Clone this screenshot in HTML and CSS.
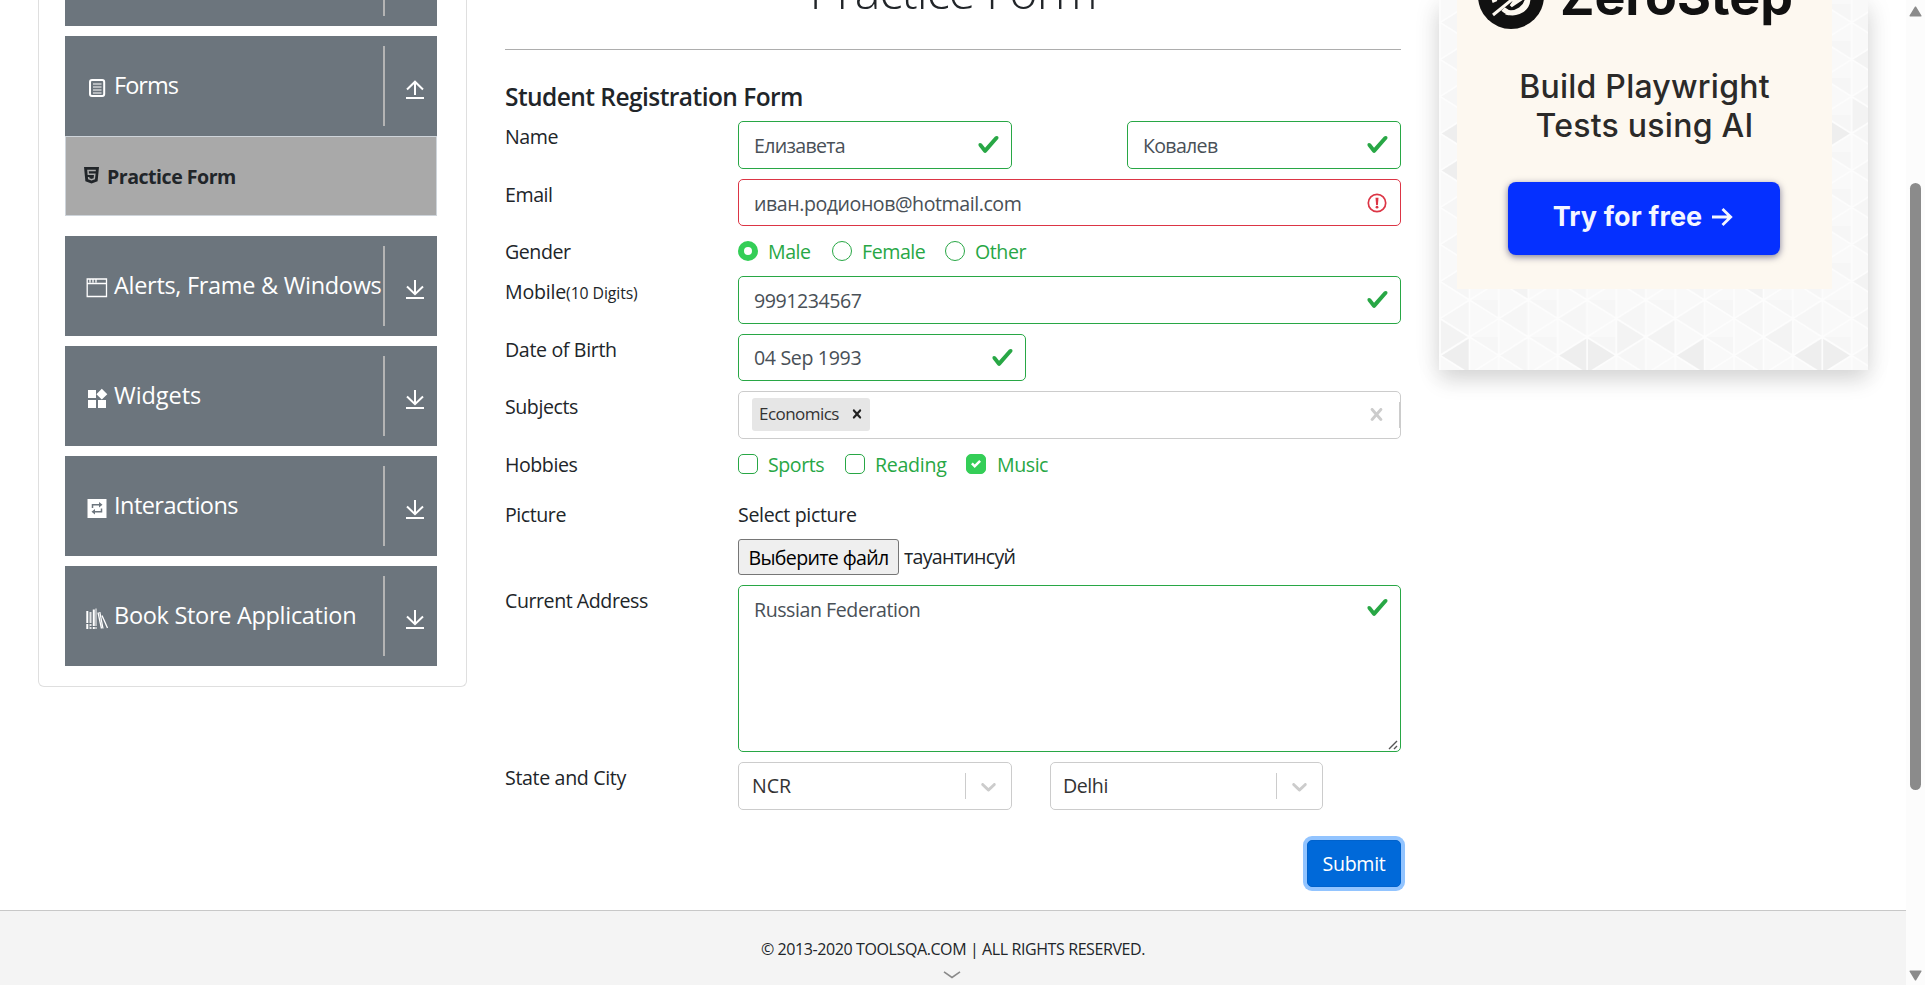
FILE: index.html
```
<!DOCTYPE html>
<html lang="en">
<head>
<meta charset="utf-8">
<title>Practice Form</title>
<link rel="stylesheet" href="styles.css">
</head>
<body>
<svg class="defs" width="0" height="0">
  <symbol id="check" viewBox="0 0 8 8"><path fill="#28a745" d="M2.3 6.73L.6 4.53c-.4-1.04.46-1.4 1.1-.8l1.1 1.4 3.4-3.8c.6-.63 1.6-.27 1.2.7l-4 4.6c-.43.5-.8.4-1.1.1z"/></symbol>
  <symbol id="down" viewBox="0 0 18 19"><path d="M9 0V14M1 6.500L9 14.200L17 6.500M0 18H18" fill="none" stroke="#fff" stroke-width="2"/></symbol>
  <symbol id="up" viewBox="0 0 18 19"><path d="M9 1.500V15M1 9.500L9 1.700L17 9.500M0 18H18" fill="none" stroke="#fff" stroke-width="2"/></symbol>
  <symbol id="cross" viewBox="0 0 20 20"><path d="M14.348 14.849c-.469.469-1.229.469-1.697 0L10 11.819l-2.651 3.029c-.469.469-1.229.469-1.697 0-.469-.469-.469-1.229 0-1.697l2.758-3.15-2.759-3.152c-.469-.469-.469-1.228 0-1.697s1.228-.469 1.697 0L10 8.183l2.651-3.031c.469-.469 1.228-.469 1.697 0s.469 1.229 0 1.697l-2.758 3.152 2.758 3.15c.469.469.469 1.229 0 1.698z"/></symbol>
  <symbol id="chevron" viewBox="0 0 20 20"><path d="M4.516 7.548c.436-.446 1.043-.481 1.576 0L10 11.295l3.908-3.747c.533-.481 1.141-.446 1.574 0 .436.445.408 1.197 0 1.615-.406.418-4.695 4.502-4.695 4.502a1.095 1.095 0 0 1-1.576 0S4.924 9.581 4.516 9.163s-.436-1.170 0-1.615z"/></symbol>
</svg>
<div class="window">
  <div class="page">
    <div class="content">
      <nav class="sidebar">
        <div class="group cut"><span class="rule"></span></div>
        <div class="group">
          <svg class="gi" viewBox="0 0 22 22"><rect x="4" y="3" width="14.200" height="16" rx="2" fill="none" stroke="#fff" stroke-width="2"/><path d="M7 7H15.500M7 10H15.500M7 13H15.500M7 16H15.500" stroke="#fff" stroke-width="1"/></svg>
          <span class="gt forms">Forms</span><span class="rule"></span><svg class="arrow"><use href="#up"/></svg>
        </div>
        <div class="sub">
          <svg class="html5" viewBox="0 0 15 17"><path fill="#212529" d="M0 0H15L13.600 14.300L7.500 16.500L1.400 14.300Z"/><path d="M11.800 3.600H4L4.300 7.300H10.800L10.300 11.700L7.500 12.700L4.800 11.700L4.600 10" fill="none" stroke="#aaa" stroke-width="1.500"/></svg>
          <span>Practice Form</span>
        </div>
        <div class="group">
          <svg class="gi" viewBox="0 0 22 22"><path d="M1.200 2H20.500V19.500H1.200ZM1.200 6.500H20.500M4 2.500V5.500M7 2.500V5.500M10 2.500V5.500" fill="none" stroke="#fff" stroke-width="1.300"/></svg>
          <span class="gt wide">Alerts, Frame &amp; Windows</span><span class="rule"></span><svg class="arrow"><use href="#down"/></svg>
        </div>
        <div class="group">
          <svg class="gi" viewBox="0 0 22 22"><path fill="#fff" d="M2 3H10V11H2ZM2 13H10V21H2ZM12 13H20V21H12ZM15.800 1.800L21.300 7.200L15.800 12.600L10.400 7.200Z"/></svg>
          <span class="gt wid">Widgets</span><span class="rule"></span><svg class="arrow"><use href="#down"/></svg>
        </div>
        <div class="group">
          <svg class="gi" viewBox="0 0 22 22"><path fill="#fff" d="M1.500 2H20.500V21H1.500Z"/><path d="M6.500 11V7.800H14.500M15.500 11.500V14.800H7.500" fill="none" stroke="#6c757d" stroke-width="1.500"/><path fill="#6c757d" d="M13 5L16.500 7.800L13 10.500ZM9 12L5.500 14.800L9 17.500Z"/></svg>
          <span class="gt">Interactions</span><span class="rule"></span><svg class="arrow"><use href="#down"/></svg>
        </div>
        <div class="group">
          <svg class="gi" viewBox="0 0 22 22"><path d="M1.300 4V22M7.800 2.500V22" stroke="#fff" stroke-width="2"/><path d="M4.500 5V22" stroke="#e4e6e8" stroke-width="2"/><path d="M10 1.500V22" stroke="#d0d3d6" stroke-width="1.500"/><path d="M12 5.500L15.500 21.500M13.800 5L17 21.500M16 8.500L21.500 21" stroke="#fff" stroke-width="1.300"/><path d="M0 16.500H6M3.500 19.500H11" stroke="#6c757d"/></svg>
          <span class="gt wide">Book Store Application</span><span class="rule"></span><svg class="arrow"><use href="#down"/></svg>
        </div>
      </nav>
      <main class="main">
        <h1>Practice Form</h1>
        <h5>Student Registration Form</h5>
        <div class="row h58"><label>Name</label><div class="field split">
          <div class="input name"><span class="cyr">Елизавета</span><svg class="ck"><use href="#check"/></svg></div>
          <div class="input name"><span class="cyr">Ковалев</span><svg class="ck"><use href="#check"/></svg></div></div></div>
        <div class="row h57"><label>Email</label><div class="field">
          <div class="input bad"><span>иван.родионов@hotmail.com</span><svg class="warn" viewBox="0 0 20 20"><circle cx="10" cy="10" r="8.700" fill="none" stroke="#dc3545" stroke-width="1.700"/><path d="M8.500 4.800H11.500L10.900 11.900H9.100Z" fill="#dc3545"/><circle cx="10" cy="14.200" r="1.400" fill="#dc3545"/></svg></div></div></div>
        <div class="row h40"><label>Gender</label><div class="field options">
          <span class="radio on"></span><span class="o1">Male</span><span class="radio"></span><span class="o2">Female</span><span class="radio"></span><span class="o5">Other</span></div></div>
        <div class="row h58"><label class="mob">Mobile<small>(10 Digits)</small></label><div class="field">
          <div class="input tall"><span>9991234567</span><svg class="ck"><use href="#check"/></svg></div></div></div>
        <div class="row h57"><label class="loose">Date of Birth</label><div class="field">
          <div class="input date"><span class="loose">04 Sep 1993</span><svg class="ck"><use href="#check"/></svg></div></div></div>
        <div class="row h58"><label>Subjects</label><div class="field">
          <div class="select multi"><span class="chip">Economics<svg><use href="#cross"/></svg></span><svg class="clear"><use href="#cross"/></svg><span class="sep"></span></div></div></div>
        <div class="row h50"><label>Hobbies</label><div class="field options">
          <span class="box"></span><span class="o3">Sports</span><span class="box"></span><span class="o4">Reading</span><span class="box on"><svg viewBox="0 0 8 8"><path fill="#fff" d="M6.564.75l-3.590 3.612-1.538-1.550L0 4.260l2.974 2.990L8 2.193z"/></svg></span><span>Music</span></div></div>
        <div class="row h86"><label>Picture</label><div class="field">
          <div class="pick">Select picture</div>
          <div class="file"><span class="filebtn">Выберите файл</span><span class="cyr">тауантинсуй</span></div></div></div>
        <div class="row h177"><label>Current Address</label><div class="field">
          <div class="area"><span>Russian Federation</span><svg class="ck"><use href="#check"/></svg>
            <svg class="grip" viewBox="0 0 10 10"><path d="M1 9L9 1M6 9L9 6" stroke="#555" stroke-width="1.400"/></svg></div></div></div>
        <div class="row h78"><label class="loose">State and City</label><div class="field cities">
          <div class="select state"><span class="ncr">NCR</span><span class="sep"></span><svg class="chev"><use href="#chevron"/></svg></div>
          <div class="select city"><span>Delhi</span><span class="sep"></span><svg class="chev"><use href="#chevron"/></svg></div></div></div>
        <div class="actions"><button class="submit">Submit</button></div>
      </main>
      <aside class="ad">
        <svg class="mesh" width="429" height="370">
          <defs>
            <pattern id="tri" x="1" y="300" width="58.800" height="37" patternUnits="userSpaceOnUse">
              <rect width="58.800" height="37" fill="#f9f9f9"/>
              <path d="M0 18L29.400 0V37ZM29.400 0L58.800 18V0Z" fill="#f6f6f6"/>
              <path d="M0 0V37M29.400 0V37M58.800 0V37M0 18.500L29.400 0L58.800 18.500L29.400 37Z" fill="none" stroke="#fdfdfd" stroke-width="1.800"/>
            </pattern>
            <path id="tl" d="M2 0L28.500 -16.500V16.500Z"/>
            <path id="trr" d="M27.500 0L1 -16.500V16.500Z"/>
          </defs>
          <rect width="429" height="370" fill="url(#tri)"/>
          <g fill="#eeeeee"><use href="#tl" x="1" y="355.500"/><use href="#tl" x="118.600" y="355.500"/><use href="#trr" x="148" y="355.500"/><use href="#tl" x="236.200" y="355.500"/><use href="#tl" x="353.800" y="355.500"/><use href="#trr" x="383.200" y="355.500"/><use href="#tl" x="1" y="133.500"/><use href="#tl" x="1" y="170.500"/><use href="#trr" x="383.200" y="133.500"/></g>
          <g fill="#f3f3f3"><use href="#trr" x="177.400" y="337"/><use href="#tl" x="206.800" y="337"/><use href="#tl" x="59.800" y="281.500"/><use href="#tl" x="295" y="281.500"/><use href="#tl" x="412.600" y="281.500"/><use href="#tl" x="412.600" y="59.500"/><use href="#trr" x="412.600" y="115"/><use href="#trr" x="1" y="337"/><use href="#tl" x="324.400" y="337"/></g>
        </svg>
        <div class="banner">
          <div class="brand"><svg viewBox="0 0 66 66"><circle cx="33" cy="33" r="33" fill="#111"/><path d="M17 39A17 17 0 1 1 28 49M25 46A15 15 0 0 0 50 36" fill="none" stroke="#fdf8f0" stroke-width="5"/><path d="M15 52L42 30L33 43L45 35" fill="none" stroke="#fdf8f0" stroke-width="3"/></svg><span>ZeroStep</span></div>
          <div class="pitch"><div>Build Playwright</div><div>Tests using AI</div></div>
          <div class="try"><span>Try for free</span><svg viewBox="0 0 22 20"><path d="M1 10H19.500M11.500 2L19.700 10L11.500 18" fill="none" stroke="#f4f6ff" stroke-width="2.800"/></svg></div>
        </div>
      </aside>
    </div>
    <footer class="footer"><span>© 2013-2020 TOOLSQA.COM | ALL RIGHTS RESERVED.</span>
      <svg viewBox="0 0 18 8"><path d="M1 .8L9 6.500L17 .8" fill="none" stroke="#8a8a8a" stroke-width="1.600"/></svg></footer>
  </div>
  <div class="scroll">
    <svg viewBox="0 0 13 11"><path d="M6.500 1.200L11.800 9.800H1.200Z" fill="#8b8b8b" stroke="#8b8b8b" stroke-width="1.500" stroke-linejoin="round"/></svg>
    <div class="thumb"></div>
    <svg viewBox="0 0 13 11"><path d="M6.500 9.800L11.800 1.200H1.200Z" fill="#8b8b8b" stroke="#8b8b8b" stroke-width="1.500" stroke-linejoin="round"/></svg>
  </div>
</div>
</body>
</html>
```
FILE: styles.css
```
* { box-sizing: border-box; }
body {
  margin: 0;
  font: 400 19.6px/30px "Open Sans", "Noto Sans", sans-serif;
  letter-spacing: -0.45px;
  color: #212529;
  background: #fff;
  overflow: hidden;
}
svg { display: block; flex: none; }
.defs { position: absolute; }
.window { display: flex; width: 1925px; height: 985px; overflow: hidden; }
.page { width: 1906px; display: flex; flex-direction: column; }
.content { display: flex; height: 910px; align-items: flex-start; }

/* sidebar */
.sidebar {
  width: 429px; height: 687px; margin-left: 38px; padding: 0 28px 0 26px;
  border: 1px solid #dfdfdf; border-top: 0; border-radius: 0 0 6px 6px;
}
.group {
  display: flex; align-items: center; height: 100px; width: 372px; margin-bottom: 10px;
  padding-left: 21px; background: #6c757d; color: #fff;
}
.group.cut { height: 26px; align-items: flex-start; }
.cut .rule { height: 16px; }
.gi { width: 22px; height: 22px; margin-right: 6px; margin-top: 3px; }
.gt { font-size: 23.5px; letter-spacing: -0.55px; white-space: nowrap; margin-top: -3px; }
.gt.forms { letter-spacing: -0.95px; }
.gt.wide { letter-spacing: -0.3px; }
.gt.wid { letter-spacing: -0.05px; }
.rule { width: 2px; height: 80px; background: #b4b4b4; position: absolute; left: 383px; }
.arrow { width: 18px; height: 19px; position: absolute; left: 406px; margin-top: 7px; }
.sub {
  display: flex; align-items: center; height: 80px; width: 372px; margin: -10px 0 20px;
  padding-left: 18px; background: #a9a9a9; border: 1px solid #ced4da;
  font-weight: 700; letter-spacing: -0.5px;
}
.html5 { width: 15px; height: 17px; margin-right: 8px; margin-top: -1px; }
.sub span { margin-top: 1px; }

/* form */
.main { width: 896px; margin-left: 38px; }
h1 {
  margin: 0; height: 50px; border-bottom: 1px solid #adadad;
  font-size: 48.5px; font-weight: 300; letter-spacing: -1px; line-height: 60px;
  display: flex; justify-content: center; align-items: flex-end; padding-bottom: 29px;
}
h5 { margin: 32px 0 9px; font-size: 24.5px; font-weight: 600; line-height: 30px; letter-spacing: -0.55px; }
.row { display: flex; }
.row > label { width: 233px; white-space: nowrap; padding-top: 1px; }
.row .loose, .loose { letter-spacing: -0.35px; }
.mob { letter-spacing: -0.2px; }
small { font-size: 15.8px; letter-spacing: -0.1px; }
.field { width: 663px; }
.h40 { height: 40px; } .h50 { height: 50px; } .h57 { height: 57px; } .h58 { height: 58px; }
.h78 { height: 78px; } .h86 { height: 86px; } .h177 { height: 177px; }
.split { display: flex; justify-content: space-between; }
.input {
  display: flex; align-items: center; justify-content: space-between; height: 47px;
  border: 1px solid #28a745; border-radius: 5px; padding: 0 11px 0 15px; color: #495057;
}
.input > span { margin-top: 1px; }
.input.name { width: 274px; height: 48px; }
.input.tall { height: 48px; }
.input.bad { border-color: #dc3545; padding-right: 13px; }
.input.bad > span { margin-top: 2px; }
.input.date { width: 288px; }
.cyr { letter-spacing: -0.7px; }
.ck { width: 23px; height: 23px; margin-top: -1px; }
.warn { width: 20px; height: 20px; }
.options { display: flex; color: #28a745; }
.options > span { margin-top: 1px; }
.options > .radio, .options > .box { width: 20px; height: 20px; margin: 5px 10px 0 0; border: 1px solid #28a745; border-radius: 50%; background: #fff; }
.options > .box { border-radius: 5px; }
.options > .radio.on { border: 6px solid #34ce57; }
.options > .box.on { display: flex; align-items: center; justify-content: center; background: #34ce57; border-color: #34ce57; margin-right: 11px; }
.box.on svg { width: 10px; height: 10px; }
.o1 { width: 64px; } .o2 { width: 83px; } .o3 { width: 77px; } .o4 { width: 91px; letter-spacing: -0.3px; }
.select { display: flex; align-items: center; height: 48px; border: 1px solid #ccc; border-radius: 5px; padding-left: 13px; color: #333; }
.select > span:first-child { margin-right: auto; }
.city > span:first-child { margin-left: -1px; }
.ncr { letter-spacing: 0; }
.sep { width: 1px; height: 26px; background: #ccc; }
.multi .sep { width: 1px; }
.chip {
  display: flex; align-items: center; justify-content: space-between; width: 118px; height: 33px;
  margin-top: -2px; padding: 0 4px 0 7px; background: #e6e6e6; border-radius: 3px;
  font-size: 17px; letter-spacing: -0.55px;
}
.chip svg { width: 18px; height: 18px; fill: #222; }
.clear { width: 25px; height: 25px; fill: #ccc; margin: -2px 10px 0 0; }
.chev { width: 25px; height: 25px; fill: #ccc; margin: 0 10px; }
.pick { height: 40px; padding-top: 1px; letter-spacing: -0.35px; }
.file { display: flex; align-items: center; gap: 5px; height: 36px; }
.filebtn {
  width: 161px; height: 36px; line-height: 35px; text-align: center; white-space: nowrap;
  background: #efefef; border: 1px solid #767676; border-radius: 3px; color: #000; letter-spacing: -0.65px;
}
.area {
  position: relative; display: flex; justify-content: space-between; height: 167px;
  padding: 9px 11px 0 15px; border: 1px solid #28a745; border-radius: 5px; color: #495057;
}
.area .ck { margin-top: 1px; }
.grip { position: absolute; right: 2px; bottom: 1px; width: 10px; height: 10px; }
.cities { display: flex; gap: 38px; }
.state { width: 274px; }
.city { width: 273px; }
.actions { display: flex; justify-content: flex-end; }
.submit {
  width: 94px; height: 47px; padding: 0; border: 1px solid #0062cc; border-radius: 5px;
  background: #0069d9; color: #fff; font: inherit; letter-spacing: -0.3px;
  box-shadow: 0 0 0 4px #92c4ff;
}

/* promo */
.ad { position: relative; width: 429px; height: 370px; margin-left: 38px; box-shadow: 0 10px 20px rgba(0,0,0,.14), 0 0 30px rgba(0,0,0,.06); }
.mesh { position: absolute; left: 0; top: 0; }
.banner {
  position: relative; width: 375px; height: 289px; margin-left: 18px; background: #fdf8f0;
  font-family: Inter, sans-serif; color: #2b2a29; overflow: hidden;
}
.brand { display: flex; align-items: center; margin: -37px 0 0 21px; height: 66px; gap: 16px; }
.brand svg { width: 66px; height: 66px; }
.brand span { font-size: 52px; font-weight: 700; letter-spacing: -0.1px; color: #111; margin-top: 2px; }
.pitch { width: 375px; margin-top: 38px; text-align: center; font-size: 32px; font-weight: 500; line-height: 39px; letter-spacing: 0.25px; }
.try {
  display: flex; align-items: center; justify-content: center; gap: 9px; width: 272px; height: 73px;
  margin: 37px 0 0 51px; padding: 0 2px 4px 0; background: #0530ff; border-radius: 8px;
  box-shadow: 0 2px 7px rgba(0,0,60,.5); color: #f4f6ff; font-size: 27px; font-weight: 700; letter-spacing: 0.15px;
}
.try svg { width: 22px; height: 20px; }

/* footer and scrollbar */
.footer {
  height: 75px; background: #f4f4f4; border-top: 1px solid #c8c8c8; display: flex; flex-direction: column;
  align-items: center; padding-top: 23px; font-size: 16px; letter-spacing: -0.4px;
}
.footer svg { width: 18px; height: 8px; margin: 7px 3px 0 0; }
.scroll { width: 19px; height: 985px; background: #fcfcfc; display: flex; flex-direction: column; align-items: center; padding-top: 6px; }
.scroll > svg { width: 13px; height: 11px; }
.thumb { width: 11px; height: 607px; margin: 166px 0 180px; border-radius: 6px; background: #8b8b8b; }
```
